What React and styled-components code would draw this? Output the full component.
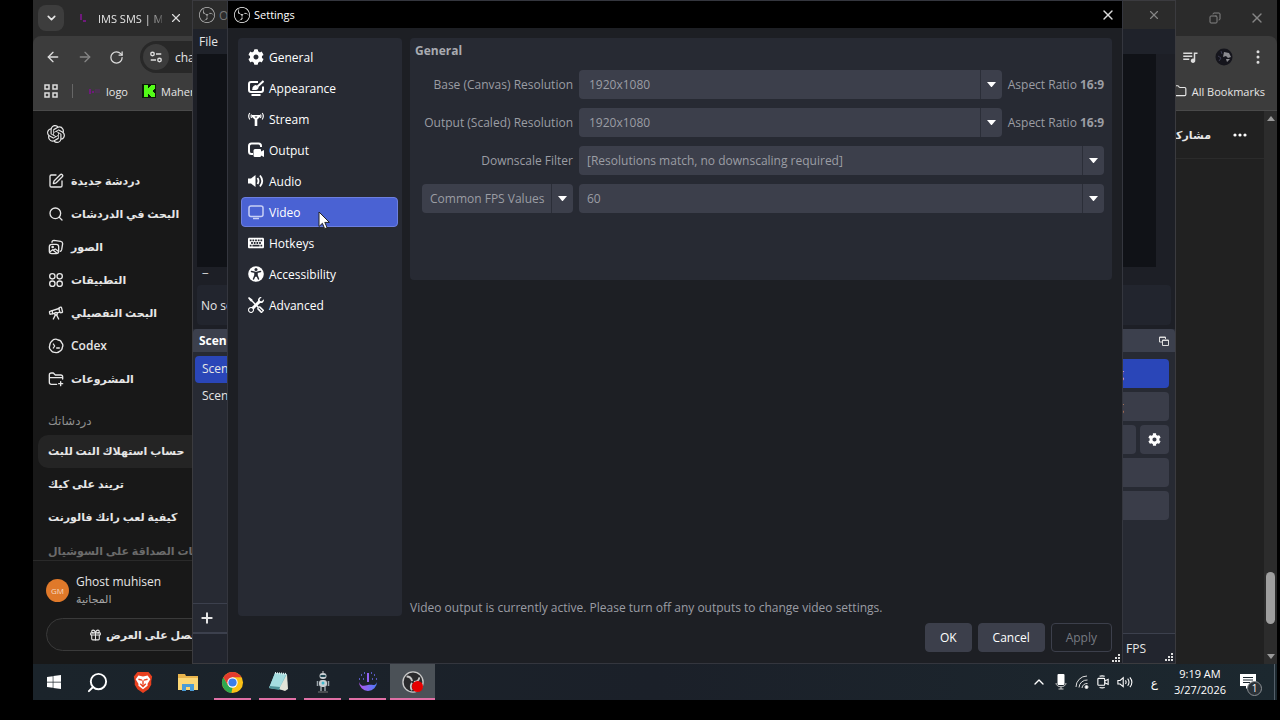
import React, { useState } from 'react';
import styled, { createGlobalStyle } from 'styled-components';
import { FaCog, FaKeyboard, FaWindows } from 'react-icons/fa';
import { BsTools } from 'react-icons/bs';
import { SiObsstudio, SiOpenai } from 'react-icons/si';
import { MdQueueMusic } from 'react-icons/md';
import {
    ArrowLeft, ArrowRight, ChevronDown, ChevronUp, Copy, Folder, FolderPlus, Gift,
    Images, MoreVertical, Plus, RotateCw, Search, SquarePen, Telescope, X,
} from 'lucide-react';

const navItems = [
    { name: 'General', icon: <FaCog /> },
    { name: 'Appearance', icon: <AppearanceIcon /> },
    { name: 'Stream', icon: <StreamIcon /> },
    { name: 'Output', icon: <OutputIcon /> },
    { name: 'Audio', icon: <AudioIcon /> },
    { name: 'Video', icon: <VideoIcon /> },
    { name: 'Hotkeys', icon: <FaKeyboard /> },
    { name: 'Accessibility', icon: <AccessIcon /> },
    { name: 'Advanced', icon: <BsTools /> },
];

const menuItems = [
    { name: 'دردشة جديدة', icon: <SquarePen /> },
    { name: 'البحث في الدردشات', icon: <Search /> },
    { name: 'الصور', icon: <ImagesIcon /> },
    { name: 'التطبيقات', icon: <AppsIcon /> },
    { name: 'البحث التفصيلي', icon: <Telescope /> },
    { name: 'Codex', icon: <CodexIcon />, latin: true },
    { name: 'المشروعات', icon: <ProjectsIcon /> },
];

const chats = ['حساب استهلاك النت للبث', 'تريند على كيك', 'كيفية لعب رانك فالورنت', 'اقتراحات الصداقة على السوشيال'];

const App = () => {
    return (
        <Screen>
            <GlobalStyle />
            <Desktop>
                <Browser />
                <ObsWindow />
                <SettingsWindow />
                <Cursor viewBox='0 0 12 19'>
                    <path d='M1 1v14.5l3.4-3.2 2.3 5.4 2.4-1-2.3-5.3h4.6z' fill='#fff' stroke='#222' />
                </Cursor>
            </Desktop>
            <Taskbar />
        </Screen>
    );
};

export default App;

const Browser = () => (
    <BrowserFrame>
        <TabStrip>
            <TabSearch aria-label='Search tabs'><ChevronDown /></TabSearch>
            <Tab>
                <MiniLogo viewBox='0 0 14 10'><path d='M4 1v6M6 8h3' stroke='#6f1a7c' strokeWidth='2' /></MiniLogo>
                <TabTitle>IMS SMS | M</TabTitle>
                <IconButton $size={14} aria-label='Close tab'><X /></IconButton>
            </Tab>
            <WinButtons>
                <IconButton $size={12} $dim $flip aria-label='Restore'><Copy /></IconButton>
                <IconButton $size={16} $dim aria-label='Close browser'><X /></IconButton>
            </WinButtons>
        </TabStrip>
        <Toolbar>
            <ToolbarRow>
                <IconButton $size={16} aria-label='Back'><ArrowLeft /></IconButton>
                <IconButton $size={16} $dim aria-label='Forward'><ArrowRight /></IconButton>
                <IconButton $size={15} aria-label='Reload'><RotateCw /></IconButton>
                <Address>
                    <SiteInfo aria-label='Site information'><TuneIcon /></SiteInfo>
                    <input aria-label='Address' defaultValue='chatgpt.com' />
                </Address>
                <IconButton $size={18} aria-label='Media'><MdQueueMusic /></IconButton>
                <Face viewBox='0 0 18 18'>
                    <circle cx='9' cy='9' r='8.5' fill='#15151c' />
                    <path d='M9 4l5 1 2 4-3 1-2-2-3 1zM11 11l4 0-3 3z' fill='#8b8b90' />
                    <path d='M3 8l3 2-2 3M6 3l1 3' stroke='#3b3b50' fill='none' />
                </Face>
                <IconButton $size={18} aria-label='Menu'><MoreVertical /></IconButton>
            </ToolbarRow>
            <BookmarkRow>
                <IconButton $size={14} aria-label='Tab groups'><GridIcon /></IconButton>
                <Divider />
                <a href='#logo'>
                    <MiniLogo viewBox='0 0 14 10'><path d='M3 3v5M5 6h2' stroke='#6f1a7c' strokeWidth='2' /><path d='M8 5h5' stroke='#4a3350' strokeWidth='4' /></MiniLogo>
                    logo
                </a>
                <a href='#maher'>
                    <KickIcon viewBox='0 0 14 14'><path d='M0 0h14v14H0z' fill='#0b1a08' /><path d='M2 1h4v3h1V3h1V2h1V1h4v4h-1v1h-1v2h1v1h1v4H9v-1H8v-1H7v-1H6v3H2z' fill='#53fc18' /></KickIcon>
                    Maher
                </a>
                <AllBookmarks href='#all'><Folder />All Bookmarks</AllBookmarks>
            </BookmarkRow>
        </Toolbar>
        <Page>
            <Sidebar>
                <LogoRow><SiOpenai /></LogoRow>
                {menuItems.map((item) => (
                    <MenuLink href='#menu' key={item.name}>
                        {item.icon}
                        {item.latin ? item.name : <Arabic dir='rtl'>{item.name}</Arabic>}
                    </MenuLink>
                ))}
                <ChatHeading>دردشاتك</ChatHeading>
                {chats.map((chat, i) => (
                    <ChatLink href='#chat' key={chat} $active={i === 0} $faded={i === 3}><Arabic dir='rtl'>{chat}</Arabic></ChatLink>
                ))}
                <Account>
                    <AccountRow>
                        <Avatar>GM</Avatar>
                        <div>
                            <UserName>Ghost muhisen</UserName>
                            <Plan>المجانية</Plan>
                        </div>
                    </AccountRow>
                    <OfferButton><Gift /><Arabic dir='rtl'>احصل على العرض</Arabic></OfferButton>
                </Account>
            </Sidebar>
            <Main>
                <PageHeader>
                    <ShareButton><Arabic dir='rtl'>مشاركة</Arabic></ShareButton>
                    <DotsButton aria-label='More'><svg viewBox='0 0 14 4'><circle cx='2' cy='2' r='1.6' /><circle cx='7' cy='2' r='1.6' /><circle cx='12' cy='2' r='1.6' /></svg></DotsButton>
                </PageHeader>
            </Main>
            <ScrollTrack>
                <svg viewBox='0 0 8 5'><path d='M4 0l4 5H0z' fill='#9a9a9a' /></svg>
                <ScrollThumb />
                <svg viewBox='0 0 8 5'><path d='M4 5l4-5H0z' fill='#9a9a9a' /></svg>
            </ScrollTrack>
        </Page>
    </BrowserFrame>
);

const ObsWindow = () => (
    <ObsFrame>
        <ObsTitle>
            <SiObsstudio />
            <span>OBS</span>
            <IconButton $size={14} $dim aria-label='Close OBS'><X /></IconButton>
        </ObsTitle>
        <ObsMenu><button>File</button></ObsMenu>
        <Preview />
        <ZoomBar><button aria-label='Zoom out'>−</button></ZoomBar>
        <SourceBar>No source</SourceBar>
        <Docks>
            <Dock>
                <DockTitle>Scenes</DockTitle>
                <SceneItem $active>Scene</SceneItem>
                <SceneItem>Scene 2</SceneItem>
                <DockTools><button aria-label='Add scene'><Plus /></button></DockTools>
            </Dock>
            <Dock $right>
                <DockTitle>Controls<DockIcon /></DockTitle>
                <Controls>
                    <ControlButton $active>Stop Streaming</ControlButton>
                    <ControlButton>Stop Recording</ControlButton>
                    <ControlRow>
                        <ControlButton aria-label='Start Virtual Camera' />
                        <GearButton aria-label='Virtual camera settings'><FaCog /></GearButton>
                    </ControlRow>
                    <ControlButton aria-label='Studio Mode' />
                    <ControlButton aria-label='Open settings' />
                </Controls>
            </Dock>
        </Docks>
        <StatusBar>
            <span>FPS</span>
            <Grip />
        </StatusBar>
    </ObsFrame>
);

const SettingsWindow = () => {
    const [page, setPage] = useState('Video');

    return (
        <SettingsFrame>
            <SettingsTitle>
                <SiObsstudio />
                <span>Settings</span>
                <IconButton $size={16} aria-label='Close settings'><X /></IconButton>
            </SettingsTitle>
            <SettingsBody>
                <Nav>
                    {navItems.map((item) => (
                        <NavButton key={item.name} $active={item.name === page} onClick={() => setPage(item.name)}>
                            {item.icon}
                            {item.name}
                        </NavButton>
                    ))}
                </Nav>
                <Content>
                    <Panel>
                        <h2>General</h2>
                        <FormRow>
                            <label htmlFor='base'>Base (Canvas) Resolution</label>
                            <Combo id='base' value='1920x1080' editable />
                            <Aspect>Aspect Ratio <b>16:9</b></Aspect>
                        </FormRow>
                        <FormRow>
                            <label htmlFor='scaled'>Output (Scaled) Resolution</label>
                            <Combo id='scaled' value='1920x1080' editable />
                            <Aspect>Aspect Ratio <b>16:9</b></Aspect>
                        </FormRow>
                        <FormRow>
                            <label htmlFor='filter'>Downscale Filter</label>
                            <Combo id='filter' value='[Resolutions match, no downscaling required]' />
                        </FormRow>
                        <FormRow>
                            <Combo id='fpstype' label='FPS type' value='Common FPS Values' />
                            <Combo id='fps' label='FPS' value='60' />
                        </FormRow>
                    </Panel>
                    <Notice>Video output is currently active. Please turn off any outputs to change video settings.</Notice>
                </Content>
            </SettingsBody>
            <Footer>
                <DialogButton>OK</DialogButton>
                <DialogButton>Cancel</DialogButton>
                <DialogButton disabled>Apply</DialogButton>
            </Footer>
            <GripCorner><Grip /></GripCorner>
        </SettingsFrame>
    );
};

const Combo = ({ id, label, value, editable }) => (
    <ComboBox>
        <select id={id} aria-label={label} defaultValue={value} data-editable={editable}>
            <option>{value}</option>
        </select>
        <ComboArrow><svg viewBox='0 0 10 6'><path d='M0 0h10L5 6z' fill='#fff' /></svg></ComboArrow>
    </ComboBox>
);

const Taskbar = () => (
    <TaskbarRow>
        <TaskButton aria-label='Start'><FaWindows size={16} /></TaskButton>
        <TaskButton aria-label='Search' $flip><Search size={23} /></TaskButton>
        <TaskButton aria-label='Brave'>
            <svg viewBox='0 0 24 24' width='22'><path d='M6 1h12l4 5-1 5 0 4-3 5-6 4-6-4-3-5V11L2 6z' fill='#e8401f' /><path d='M7 5l5 1 5-1 3 4-3 5 0 2-5 4-5-4 0-2-3-5z' fill='#fff' /><path d='M7 9l4 1M17 9l-4 1M12 10v5M9 14l3 3 3-3' stroke='#e8401f' strokeWidth='1.5' fill='none' /></svg>
        </TaskButton>
        <TaskButton aria-label='File Explorer'>
            <svg viewBox='0 0 22 20' width='22'><path d='M1 2h7l1 2h12v14H1z' fill='#e9b44c' /><path d='M1 6h20v12H1z' fill='#fbd775' /><path d='M5 12h12v7h-4v-4H9v4H5z' fill='#4a9cd6' /></svg>
        </TaskButton>
        <TaskButton aria-label='Chrome' $open>
            <svg viewBox='0 0 24 24' width='23'><circle cx='12' cy='12' r='11' fill='#fbc116' /><path d='M2.5 6.5L7.3 14.8 12 17.5h0L10.8 22.9A11 11 0 0 1 2.5 6.5z' fill='#2da94f' /><path d='M2.5 6.5A11 11 0 0 1 21.5 6.5H12L7.2 14.7z' fill='#e33b2e' /><circle cx='12' cy='12' r='5.4' fill='#fff' /><circle cx='12' cy='12' r='4.3' fill='#3b7de9' /></svg>
        </TaskButton>
        <TaskButton aria-label='Notepad' $open>
            <svg viewBox='0 0 22 22' width='22'><path d='M8 2l12 1-2 16-16-2z' fill='#7fc4c9' /><path d='M8 2l11 1-7 15L2 17z' fill='#a5dde0' /><path d='M20 3l1 15-3 2-6-2z' fill='#e2e4d8' /><path d='M3 15l10 1-1 3-10-2z' fill='#4f9298' /><path d='M8 2l12 1' stroke='#dfeeee' strokeWidth='2' strokeDasharray='1 1' /></svg>
        </TaskButton>
        <TaskButton aria-label='Robot' $open>
            <svg viewBox='0 0 18 22' width='18'><path d='M9 0v3' stroke='#ccc' /><rect x='5.500' y='2' width='7' height='6' rx='3' fill='#c8ced2' /><path d='M6.500 5h5' stroke='#1d4450' strokeWidth='2' /><rect x='5' y='9' width='8' height='7' rx='3' fill='#c8ced2' /><circle cx='9' cy='12' r='1.5' fill='#3fb9ce' /><path d='M3.500 10v5M14.500 10v5M7 16v4M11 16v4' stroke='#9aa5ab' strokeWidth='1.500' /><path d='M4 21h10' stroke='#777' /></svg>
        </TaskButton>
        <TaskButton aria-label='Recorder' $open>
            <svg viewBox='0 0 22 22' width='22'><defs><linearGradient id='rec'><stop offset='0' stopColor='#b455f0' /><stop offset='1' stopColor='#4b7cf5' /></linearGradient></defs><path d='M2 11c2 5 5 4 9 3s7 2 9-3a9 9 0 0 1-18 0z' fill='url(#rec)' /><path d='M11 2v9' stroke='#9564f5' strokeWidth='2' /><path d='M2 8h1M4 4h1M7 2h1M14 2h1M17 4h1M19 8h1M6 8h1M15 8h1' stroke='#6c6cf0' strokeWidth='1.5' /></svg>
        </TaskButton>
        <TaskButton aria-label='OBS Studio' $open $active>
            <svg viewBox='0 0 24 24' width='22'><circle cx='12' cy='12' r='11' fill='#2a2a2c' stroke='#c9c9c9' strokeWidth='1.500' /><path d='M5 6q5 0 6 5M19 7q-1 5-6 5M11 21q-3-4 0-8' stroke='#c9c9c9' strokeWidth='2' fill='none' /></svg>
            <RecDot />
        </TaskButton>
        <Tray>
            <TrayButton aria-label='Show hidden icons'><ChevronUp size={16} /></TrayButton>
            <svg viewBox='0 0 12 16' width='12'><rect x='2.500' y='0' width='7' height='11' rx='1' fill='#fff' /><path d='M1 9c0 5 10 5 10 0M6 13v2M3.500 15h5' stroke='#ccc' fill='none' /></svg>
            <svg viewBox='0 0 14 14' width='14' fill='none' stroke='#ddd'><path d='M1 12A11 11 0 0 1 12 1M4 12.5A8 8 0 0 1 12.5 5M7 13a5 5 0 0 1 5.500-4.500' /><circle cx='11.500' cy='12' r='1.500' fill='#fff' /></svg>
            <svg viewBox='0 0 14 16' width='12' fill='none' stroke='#fff' strokeWidth='1.3'><rect x='1' y='4' width='8' height='8' rx='1' /><path d='M9 7l4-2v6l-4-2M3 1.500q3-1 6 0M3 14.500q3 1 6 0' /></svg>
            <svg viewBox='0 0 18 14' width='16' fill='none' stroke='#fff' strokeWidth='1.2'><path d='M1 5h2.500L7 2v10L3.500 9H1zM9.500 5q1.500 2 0 4M12 3q3 4 0 8M14.500 1.500q4.500 5.500 0 11' /></svg>
            <Lang>ع</Lang>
            <Clock>
                <span>9:19 AM</span>
                <span>3/27/2026</span>
            </Clock>
            <Notify aria-label='Notifications'>
                <svg viewBox='0 0 16 16' width='16'><path d='M0 0h16v12H9l-3 3v-3H0z' fill='#fff' /><path d='M3 3.500h10M3 6h10M3 8.500h7' stroke='#1b272f' /></svg>
                <Badge>1</Badge>
            </Notify>
        </Tray>
    </TaskbarRow>
);

const Grip = () => (
    <svg viewBox='0 0 8 8' width='8' height='8' fill='#ddd'>
        <path d='M6 0h2v2H6zM6 3h2v2H6zM3 3h2v2H3zM6 6h2v2H6zM3 6h2v2H3zM0 6h2v2H0z' />
    </svg>
);

function AppearanceIcon() {
    return (
        <svg viewBox='0 0 16 16' fill='none' stroke='#fff' strokeWidth='2'>
            <path d='M10 2H3Q1 2 1 4v6q0 2 2 2h10q2 0 2-2V6.500M3.500 15h9' />
            <path d='M15.500 1L9.500 6.500' />
            <path d='M4 10Q4.500 9 4.500 7.500 5.500 5 8 5l2.500 2q.5 3.500-6.500 3z' fill='#fff' stroke='none' />
        </svg>
    );
}

function StreamIcon() {
    return (
        <svg viewBox='0 0 16 16' fill='none' stroke='#fff'>
            <path d='M4 4h8v2L9.300 8.500V15H6.700V8.500L4 6z' fill='#fff' stroke='none' />
            <path d='M6.500 5.500h3L8 7z' fill='#272a33' stroke='none' />
            <path d='M1.800 2q-2.200 3 0 6.500M14.200 2q2.200 3 0 6.500M3.500 3.500q-.8 1.500 0 3.500M12.500 3.500q.8 1.500 0 3.500' strokeWidth='1.200' />
        </svg>
    );
}

function OutputIcon() {
    return (
        <svg viewBox='0 0 16 16'>
            <path d='M5 12H3.500Q1 12 1 9.500V4q0-2.500 2.500-2.500h7Q13 1.500 13 4v1' fill='none' stroke='#fff' strokeWidth='2' />
            <path d='M7 7h5q1 0 1 1v1.500L16 8v7l-3-1.500q0 1.500-1 1.500H7q-1.500 0-1.500-1.500v-5Q5.500 7 7 7z' fill='#fff' />
        </svg>
    );
}

function AudioIcon() {
    return (
        <svg viewBox='0 0 16 16' fill='none' stroke='#fff' strokeWidth='1.800'>
            <path d='M0 5.500h3L7.500 2v12L3 10.500H0z' fill='#fff' stroke='none' />
            <path d='M9.500 5q2 3 0 6M12 2.500q4.500 5.500 0 11' />
        </svg>
    );
}

function VideoIcon() {
    return (
        <svg viewBox='0 0 16 16' fill='none' stroke='#c7cff5' strokeWidth='1.500'>
            <rect x='1' y='2' width='14' height='10.500' rx='2' />
            <path d='M5 14.500h6' />
        </svg>
    );
}

function AccessIcon() {
    return (
        <svg viewBox='0 0 16 16'>
            <circle cx='8' cy='8' r='7.800' fill='#fff' />
            <circle cx='8' cy='3.600' r='1.500' fill='#272a33' />
            <path d='M3.500 5.500L7 6.300v3L5.500 13M12.500 5.500L9 6.300v3l1.500 3.700M7.500 6.500v3.500h1V6.500' fill='none' stroke='#272a33' strokeWidth='1.500' strokeLinecap='round' />
        </svg>
    );
}

function ImagesIcon() {
    return (
        <svg viewBox='0 0 24 24' fill='none' stroke='currentColor' strokeWidth='2' strokeLinecap='round' strokeLinejoin='round'>
            <rect x='2' y='8' width='14' height='14' rx='3.500' />
            <path d='M6 5q0-3 3-3l10 1.500q3 .5 3 3.500l-1.500 9q-.5 2-2 2.500M3 19l4-3 6 5M9 16l2-1 4 3' />
            <circle cx='7' cy='12' r='1' />
        </svg>
    );
}

function ProjectsIcon() {
    return (
        <svg viewBox='0 0 24 24' fill='none' stroke='currentColor' strokeWidth='2' strokeLinecap='round' strokeLinejoin='round'>
            <path d='M13 20H5q-3 0-3-3V6q0-3 3-3h3l3 3h8q3 0 3 3v3M2 10h20M19 16v6M16 19h6' />
        </svg>
    );
}

function AppsIcon() {
    return (
        <svg viewBox='0 0 24 24' fill='none' stroke='currentColor' strokeWidth='2'>
            <circle cx='6.500' cy='6.500' r='4' /><circle cx='17.500' cy='6.500' r='4' />
            <circle cx='6.500' cy='17.500' r='4' /><circle cx='17.500' cy='17.500' r='4' />
        </svg>
    );
}

function CodexIcon() {
    return (
        <svg viewBox='0 0 24 24' fill='none' stroke='currentColor' strokeWidth='2' strokeLinecap='round' strokeLinejoin='round'>
            <path d='M8 2.500q4-2 7 .5 4 0 5.500 4 3 3 1 7 0 4-4 6-3 3-7 1.500-4 .5-6-3-3.500-3-2-7 0-5 5.500-9z' />
            <path d='M8 9l2 3-2 3M13 15h4' />
        </svg>
    );
}

function TuneIcon() {
    return (
        <svg viewBox='0 0 16 16' width='14' fill='none' stroke='#ddd' strokeWidth='1.600'>
            <circle cx='4' cy='4.500' r='2' /><path d='M8 4.500h6M2 11.500h6' /><circle cx='12' cy='11.500' r='2' />
        </svg>
    );
}

function GridIcon() {
    return (
        <svg viewBox='0 0 14 14' fill='none' stroke='currentColor' strokeWidth='1.500'>
            <path d='M1 1h4v4H1zM9 1h4v4H9zM1 9h4v4H1zM9 9h4v4H9z' />
        </svg>
    );
}

function DockIcon() {
    return (
        <svg viewBox='0 0 10 10' width='10' fill='none' stroke='#ddd'>
            <path d='M3 6H.5V1h6v2M.5 1.500h6' /><path d='M3.500 4h6v5.500h-6zM3.500 4.500h6' />
        </svg>
    );
}

const GlobalStyle = createGlobalStyle`
    * {
        box-sizing: border-box;
    }

    body{
        margin: 0;
        background-color: #000;
        overflow: hidden;
    }

    button, input, select{
        font: inherit;
        color: inherit;
    }

    button{
        padding: 0;
        border: none;
        background: none;
        white-space: nowrap;
    }

    a{
        color: inherit;
        text-decoration: none;
        white-space: nowrap;
    }

    svg{
        flex-shrink: 0;
        display: block;
    }
`;
const Screen = styled.div`
    height: 100vh;
    display: flex;
    flex-direction: column;
    padding: 0 3px 20px 33px;
    background-color: #000;
    color: #e6e6e6;
    font-family: 'Open Sans', 'DejaVu Sans', sans-serif;
    font-size: 12px;
`;
const Desktop = styled.div`
    position: relative;
    flex: 1;
    min-height: 0;
    overflow: hidden;
`;
const Cursor = styled.svg`
    position: absolute;
    left: 285px;
    top: 211px;
    width: 12px;
    height: 19px;
`;
const IconButton = styled.button`
    display: flex;
    align-items: center;
    justify-content: center;
    color: ${({ $dim }) => ($dim ? '#858585' : '#dcdcdc')};

    svg{
        width: ${({ $size }) => $size}px;
        height: ${({ $size }) => $size}px;
        transform: ${({ $flip }) => ($flip ? 'scaleX(-1)' : 'none')};
    }
`;
const Arabic = styled.span`
    font-size: 11px;
`;

/* browser */
const BrowserFrame = styled.div`
    height: 100%;
    display: flex;
    flex-direction: column;
    background-color: #2b2b2b;
`;
const TabStrip = styled.div`
    height: 36px;
    display: flex;
    align-items: center;
    padding-left: 5px;
`;
const TabSearch = styled.button`
    width: 26px;
    height: 26px;
    display: flex;
    align-items: center;
    justify-content: center;
    border-radius: 8px;
    background-color: #3d3d3d;

    svg{
        width: 13px;
        stroke-width: 3;
    }
`;
const Tab = styled.div`
    display: flex;
    align-items: center;
    padding-left: 13px;
    gap: 7px;
`;
const MiniLogo = styled.svg`
    width: 14px;
    height: 10px;
`;
const TabTitle = styled.span`
    width: 64px;
    font-size: 11px;
    white-space: nowrap;
    mask-image: linear-gradient(90deg, #000 75%, transparent 110%);
`;
const WinButtons = styled.div`
    margin-left: auto;
    padding-right: 12px;
    display: flex;
    gap: 28px;
`;
const Toolbar = styled.div`
    height: 75px;
    border-radius: 8px 8px 0 0;
    background-color: #3c3c3c;
    border-bottom: 1px solid #4a4a4a;
`;
const ToolbarRow = styled.div`
    height: 42px;
    display: flex;
    align-items: center;
    gap: 16px;
    padding: 0 10px 0 12px;
`;
const Address = styled.div`
    flex: 1;
    height: 32px;
    display: flex;
    align-items: center;
    gap: 4px;
    padding-left: 3px;
    border-radius: 16px;
    background-color: #282828;

    input{
        flex: 1;
        border: none;
        outline: none;
        background: none;
    }
`;
const SiteInfo = styled.button`
    width: 26px;
    height: 26px;
    display: flex;
    align-items: center;
    justify-content: center;
    border-radius: 50%;
    background-color: #3c3c3c;
`;
const Face = styled.svg`
    width: 18px;
    height: 18px;
`;
const BookmarkRow = styled.div`
    height: 26px;
    display: flex;
    align-items: center;
    padding: 0 12px 0 11px;
    gap: 14px;
    font-size: 11px;

    a{
        display: flex;
        align-items: center;
        gap: 5px;
    }
`;
const Divider = styled.div`
    width: 1px;
    height: 14px;
    background-color: #666;
`;
const KickIcon = styled.svg`
    width: 14px;
    height: 14px;
`;
const AllBookmarks = styled.a`
    margin-left: auto;

    svg{
        width: 14px;
    }
`;
const Page = styled.div`
    flex: 1;
    min-height: 0;
    display: flex;
    background-color: #212121;
`;
const Sidebar = styled.div`
    width: 230px;
    display: flex;
    flex-direction: column;
    background-color: #181818;
    font-weight: 600;
    padding-left: 5px;
`;
const LogoRow = styled.div`
    height: 53px;
    padding: 14px 0 0 9px;
    font-size: 18px;
`;
const MenuLink = styled.a`
    height: 33px;
    display: flex;
    align-items: center;
    gap: 7px;
    padding-left: 10px;

    svg{
        width: 16px;
        height: 16px;
    }
`;
const ChatHeading = styled.div`
    height: 40px;
    padding: 18px 0 0 10px;
    line-height: 16px;
    color: #8f8f8f;
    font-weight: 400;
`;
const ChatLink = styled.a`
    height: ${({ $faded }) => ($faded ? 26 : 33)}px;
    display: flex;
    align-items: ${({ $faded }) => ($faded ? 'flex-end' : 'center')};
    padding: 0 0 2px 10px;
    border-radius: 10px;
    background-color: ${({ $active }) => ($active ? '#242424' : 'transparent')};
    color: ${({ $faded }) => ($faded ? '#6b6b6b' : 'inherit')};
`;
const Account = styled.div`
    flex: 1;
    margin-left: -5px;
    padding: 10px 0 0 13px;
    border-top: 1px solid #2a2a2a;
`;
const AccountRow = styled.div`
    height: 38px;
    display: flex;
    align-items: center;
    gap: 7px;
`;
const Avatar = styled.div`
    width: 23px;
    height: 23px;
    display: flex;
    align-items: center;
    justify-content: center;
    border-radius: 50%;
    background-color: #e0792a;
    color: #f6d9c0;
    font-size: 8px;
    font-weight: 400;
`;
const UserName = styled.div`
    line-height: 18px;
    font-weight: 500;
`;
const Plan = styled.div`
    line-height: 16px;
    color: #a5a5a5;
    font-size: 11px;
    font-weight: 400;
`;
const OfferButton = styled.button`
    width: 200px;
    height: 33px;
    display: flex;
    align-items: center;
    justify-content: center;
    gap: 4px;
    margin-top: 9px;
    border: 1px solid #3a3a3a;
    border-radius: 17px;
    background-color: #1d1d1d;

    svg{
        width: 13px;
    }
`;
const Main = styled.div`
    flex: 1;
`;
const PageHeader = styled.div`
    height: 48px;
    display: flex;
    align-items: center;
    justify-content: flex-end;
    gap: 22px;
    padding-right: 17px;
    border-bottom: 1px solid #2b2b2b;
`;
const ShareButton = styled.button`
    font-weight: 700;
`;
const DotsButton = styled.button`
    svg{
        width: 14px;
        height: 4px;
        fill: #fff;
    }
`;
const ScrollTrack = styled.div`
    width: 13px;
    display: flex;
    flex-direction: column;
    align-items: center;
    padding: 5px 0;
    background-color: #2c2c2c;

    svg{
        width: 8px;
        height: 5px;
    }
`;
const ScrollThumb = styled.div`
    width: 9px;
    height: 52px;
    margin: auto 0 30px;
    border-radius: 5px;
    background-color: #9f9f9f;
`;

/* OBS main window */
const ObsFrame = styled.div`
    position: absolute;
    left: 159px;
    right: 101px;
    top: 0;
    bottom: 0;
    display: flex;
    flex-direction: column;
    border: 1px solid #3b3b3f;
    background-color: #1d1f26;
`;
const ObsTitle = styled.div`
    height: 28px;
    display: flex;
    align-items: center;
    gap: 4px;
    padding: 0 14px 0 6px;
    background-color: #2b2b2b;
    color: #777;

    > svg{
        font-size: 16px;
        color: #bbb;
    }

    button{
        margin-left: auto;
    }
`;
const ObsMenu = styled.div`
    height: 25px;
    display: flex;
    align-items: center;
    padding-left: 6px;
    background-color: #1f222a;
`;
const Preview = styled.div`
    height: 213px;
    margin: 0 19px 0 4px;
    background-color: #101217;
`;
const ZoomBar = styled.div`
    height: 18px;
    padding-left: 9px;
    line-height: 14px;
`;
const SourceBar = styled.div`
    height: 40px;
    margin: 0 4px 4px;
    padding-left: 4px;
    line-height: 42px;
    border-radius: 4px;
    background-color: #22252e;
`;
const Docks = styled.div`
    flex: 1;
    display: flex;
    justify-content: space-between;
    background-color: #272a33;
`;
const Dock = styled.div`
    width: ${({ $right }) => ($right ? 188 : 200)}px;
    display: flex;
    flex-direction: column;
`;
const DockTitle = styled.div`
    height: 23px;
    display: flex;
    align-items: center;
    justify-content: space-between;
    margin-bottom: 4px;
    padding: 0 6px;
    border-radius: 4px 4px 0 0;
    background-color: #3c404d;
    font-weight: 700;
    color: #fff;
`;
const SceneItem = styled.div`
    height: 27px;
    margin-left: 2px;
    padding-left: 7px;
    line-height: 26px;
    border-radius: 4px;
    background-color: ${({ $active }) => ($active ? '#2a46b8' : 'transparent')};
`;
const DockTools = styled.div`
    height: 30px;
    margin-top: auto;
    padding: 6px;
    border: 1px solid #3c404d;
    border-left: none;

    svg{
        width: 16px;
        height: 16px;
        stroke-width: 3;
    }
`;
const Controls = styled.div`
    display: flex;
    flex-direction: column;
    gap: 4px;
    padding: 3px 6px 0;
`;
const ControlRow = styled.div`
    display: flex;
    gap: 4px;
`;
const ControlButton = styled.button`
    flex: 1 0 auto;
    height: 29px;
    border-radius: 4px;
    background-color: ${({ $active }) => ($active ? '#2a46b8' : '#3a3d49')};
`;
const GearButton = styled.button`
    width: 29px;
    height: 29px;
    display: flex;
    align-items: center;
    justify-content: center;
    border-radius: 4px;
    background-color: #3a3d49;
    color: #fff;
    font-size: 13px;
`;
const StatusBar = styled.div`
    height: 30px;
    display: flex;
    align-items: center;
    justify-content: flex-end;
    gap: 19px;
    padding-right: 2px;
    border-top: 1px solid #3c404d;
    background-color: #22252e;

    svg{
        align-self: flex-end;
        margin-bottom: 2px;
    }
`;

/* settings dialog */
const SettingsFrame = styled.div`
    position: absolute;
    left: 194px;
    right: 154px;
    top: 0;
    bottom: 0;
    display: flex;
    flex-direction: column;
    border: 1px solid #34363e;
    background-color: #1d1f24;
`;
const SettingsTitle = styled.div`
    height: 27px;
    display: flex;
    align-items: center;
    gap: 4px;
    padding: 0 6px;
    background-color: #000;
    color: #fff;
    font-size: 11px;
    font-weight: 500;

    > svg{
        font-size: 16px;
    }

    button{
        margin-left: auto;
    }
`;
const SettingsBody = styled.div`
    flex: 1;
    display: flex;
    gap: 8px;
    padding: 10px 10px 0;
`;
const Nav = styled.nav`
    width: 164px;
    display: flex;
    flex-direction: column;
    gap: 1px;
    padding: 4px 4px 0 3px;
    border-radius: 4px;
    background-color: #272a33;
`;
const NavButton = styled.button`
    height: 30px;
    display: flex;
    align-items: center;
    gap: 5px;
    padding-left: 6px;
    border: 1px solid ${({ $active }) => ($active ? '#6d7fe0' : 'transparent')};
    border-radius: 4px;
    background-color: ${({ $active }) => ($active ? '#4a62d3' : 'transparent')};
    color: #fff;

    svg{
        width: 16px;
        height: 16px;
    }
`;
const Content = styled.div`
    flex: 1;
    display: flex;
    flex-direction: column;
    color: #9b9da4;
`;
const Panel = styled.div`
    height: 242px;
    display: flex;
    flex-direction: column;
    gap: 9px;
    padding: 4px 8px 0 12px;
    border-radius: 4px;
    background-color: #272a33;

    h2{
        margin: 0 -7px 2px;
        font-size: 12px;
        line-height: 17px;
        color: #a9abb1;
    }
`;
const FormRow = styled.div`
    height: 29px;
    display: flex;
    align-items: center;
    gap: 6px;

    > :first-child{
        width: 151px;
        flex: none;
        text-align: right;
    }
`;
const ComboBox = styled.div`
    position: relative;
    flex: 1;
    height: 29px;

    select{
        width: 100%;
        height: 100%;
        padding: 0 26px 0 8px;
        appearance: none;
        border: none;
        border-radius: 4px;
        background-color: #3c3f4b;
    }

    select[data-editable]{
        padding-left: 10px;
    }
`;
const ComboArrow = styled.span`
    position: absolute;
    top: 0;
    right: 0;
    width: 22px;
    height: 100%;
    display: flex;
    align-items: center;
    justify-content: center;
    border-left: 1px solid #2b2e38;
    pointer-events: none;

    svg{
        width: 9px;
    }
`;
const Aspect = styled.span`
    white-space: nowrap;
`;
const Notice = styled.p`
    margin: auto 0 0;
    line-height: 16px;
`;
const Footer = styled.div`
    display: flex;
    justify-content: flex-end;
    gap: 6px;
    padding: 7px 10px 11px;
`;
const DialogButton = styled.button`
    height: 29px;
    padding: 0 14px;
    border: 1px solid #3c3f4b;
    border-radius: 4px;
    background-color: #3c3f4b;
    color: #fff;

    &:disabled{
        background-color: transparent;
        color: #777a82;
    }
`;
const GripCorner = styled.div`
    position: absolute;
    right: 2px;
    bottom: 1px;
`;

/* taskbar */
const TaskbarRow = styled.div`
    height: 36px;
    display: flex;
    background: linear-gradient(90deg, #1b242b, #1b2029 50%, #1c282f);
`;
const TaskButton = styled.button`
    position: relative;
    width: 45px;
    display: flex;
    align-items: center;
    justify-content: center;
    color: #fff;
    background-color: ${({ $active }) => ($active ? '#4b5157' : 'transparent')};

    &:first-child{
        width: 42px;
    }

    svg{
        transform: ${({ $flip }) => ($flip ? 'scaleX(-1)' : 'none')};
    }

    &::after{
        content: '';
        position: absolute;
        left: ${({ $active }) => ($active ? 0 : 4)}px;
        right: ${({ $active }) => ($active ? 0 : 4)}px;
        bottom: 0;
        height: ${({ $open }) => ($open ? 2 : 0)}px;
        background-color: #e070a6;
    }
`;
const RecDot = styled.span`
    position: absolute;
    left: 22px;
    top: 17px;
    width: 11px;
    height: 11px;
    border-radius: 50%;
    background-color: #e60000;
`;
const Tray = styled.div`
    margin-left: auto;
    display: flex;
    align-items: center;
    gap: 8px;
    padding-right: 12px;
    border-right: 1px solid #55606a;
    color: #fff;
    margin-right: 2px;
`;
const TrayButton = styled.button`
    display: flex;
`;
const Lang = styled.span`
    padding: 0 8px 0 10px;
`;
const Clock = styled.div`
    display: flex;
    flex-direction: column;
    align-items: center;
    font-size: 11px;
    line-height: 16px;
`;
const Notify = styled.button`
    position: relative;
    width: 28px;
    padding-left: 6px;
`;
const Badge = styled.span`
    position: absolute;
    right: 0;
    top: 7px;
    width: 15px;
    height: 15px;
    border: 1px solid #8b9094;
    border-radius: 50%;
    background-color: #2b3238;
    font-size: 10px;
    line-height: 13px;
`;
